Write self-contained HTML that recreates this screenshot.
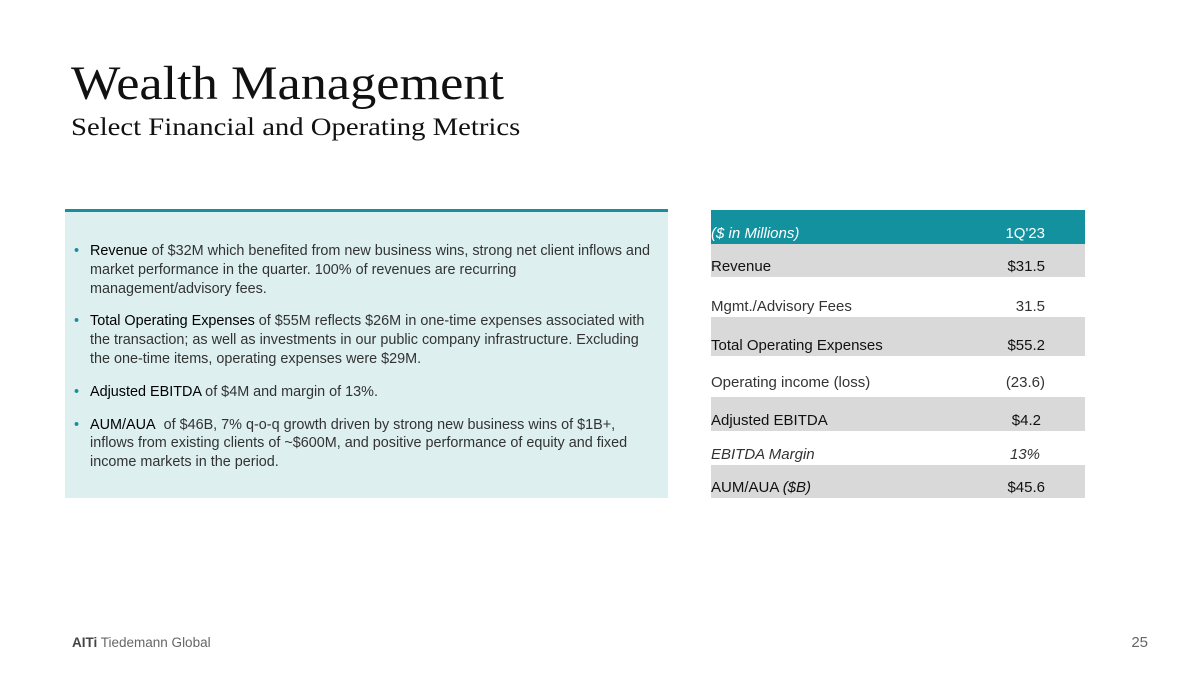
<!DOCTYPE html>
<html><head><meta charset="utf-8"><style>
*{margin:0;padding:0;box-sizing:border-box}
body{width:1200px;height:675px;background:#fff;position:relative;overflow:hidden;font-family:"Liberation Sans",sans-serif;color:#1a1a1a}
.t1{position:absolute;left:71px;top:56px;font-family:"Liberation Serif",serif;font-size:48px;line-height:56px;color:#111;transform-origin:0 0;transform:scaleX(1.09)}
.t2{position:absolute;left:71px;top:111px;font-family:"Liberation Serif",serif;font-size:25.5px;line-height:32px;color:#111;transform-origin:0 0;transform:scaleX(1.125)}
.panel{position:absolute;left:65px;top:209px;width:603px;height:289px;background:#ddefef;border-top:3px solid #1a8f9c}
ul{position:absolute;left:74px;top:242px;width:620px;list-style:none;font-size:14.4px;line-height:18.8px;color:#333;white-space:nowrap}
li{position:relative;padding-left:16px;margin-bottom:14px}
li::before{content:"•";position:absolute;left:0;color:#1a8f9c}
li b{font-weight:normal;color:#000}
.row{position:absolute;left:711px;width:374px;font-size:15px;color:#111}
.row span{position:absolute;bottom:2px}
.row .v{right:40px}
.g{background:#d9d9d9}
.foot{position:absolute;left:72px;top:635px;font-size:13.5px;color:#666}
.pg{position:absolute;right:52px;top:634px;font-size:15px;color:#666}
</style></head><body>
<div class="t1">Wealth Management</div>
<div class="t2">Select Financial and Operating Metrics</div>
<div class="panel"></div>
<ul>
<li><b>Revenue</b> of $32M which benefited from new business wins, strong net client inflows and<br>market performance in the quarter. 100% of revenues are recurring<br>management/advisory fees.</li>
<li><b>Total Operating Expenses</b> of $55M reflects $26M in one-time expenses associated with<br>the transaction; as well as investments in our public company infrastructure. Excluding<br>the one-time items, operating expenses were $29M.</li>
<li><b>Adjusted EBITDA</b> of $4M and margin of 13%.</li>
<li><b>AUM/AUA</b>&nbsp; of $46B, 7% q-o-q growth driven by strong new business wins of $1B+,<br>inflows from existing clients of ~$600M, and positive performance of equity and fixed<br>income markets in the period.</li>
</ul>
<div class="row" style="top:210px;height:34px;background:#14919f;color:#fff"><span style="left:0;font-style:italic">($ in Millions)</span><span class="v">1Q'23</span></div>
<div class="row g" style="top:244px;height:33px"><span style="left:0">Revenue</span><span class="v">$31.5</span></div>
<div class="row" style="top:277px;height:40px"><span style="left:0;color:#333">Mgmt./Advisory Fees</span><span class="v" style="color:#333">31.5</span></div>
<div class="row g" style="top:317px;height:39px"><span style="left:0">Total Operating Expenses</span><span class="v">$55.2</span></div>
<div class="row" style="top:356px;height:37px"><span style="left:0;color:#333">Operating income (loss)</span><span class="v" style="color:#333">(23.6)</span></div>
<div class="row g" style="top:397px;height:34px"><span style="left:0">Adjusted EBITDA</span><span class="v" style="right:44px">$4.2</span></div>
<div class="row" style="top:431px;height:34px;font-style:italic;color:#333"><span style="left:0">EBITDA Margin</span><span class="v" style="right:45px">13%</span></div>
<div class="row g" style="top:465px;height:33px"><span style="left:0">AUM/AUA <i>($B)</i></span><span class="v">$45.6</span></div>
<div class="foot"><b style="color:#444">AITi</b> Tiedemann Global</div>
<div class="pg">25</div>
</body></html>
